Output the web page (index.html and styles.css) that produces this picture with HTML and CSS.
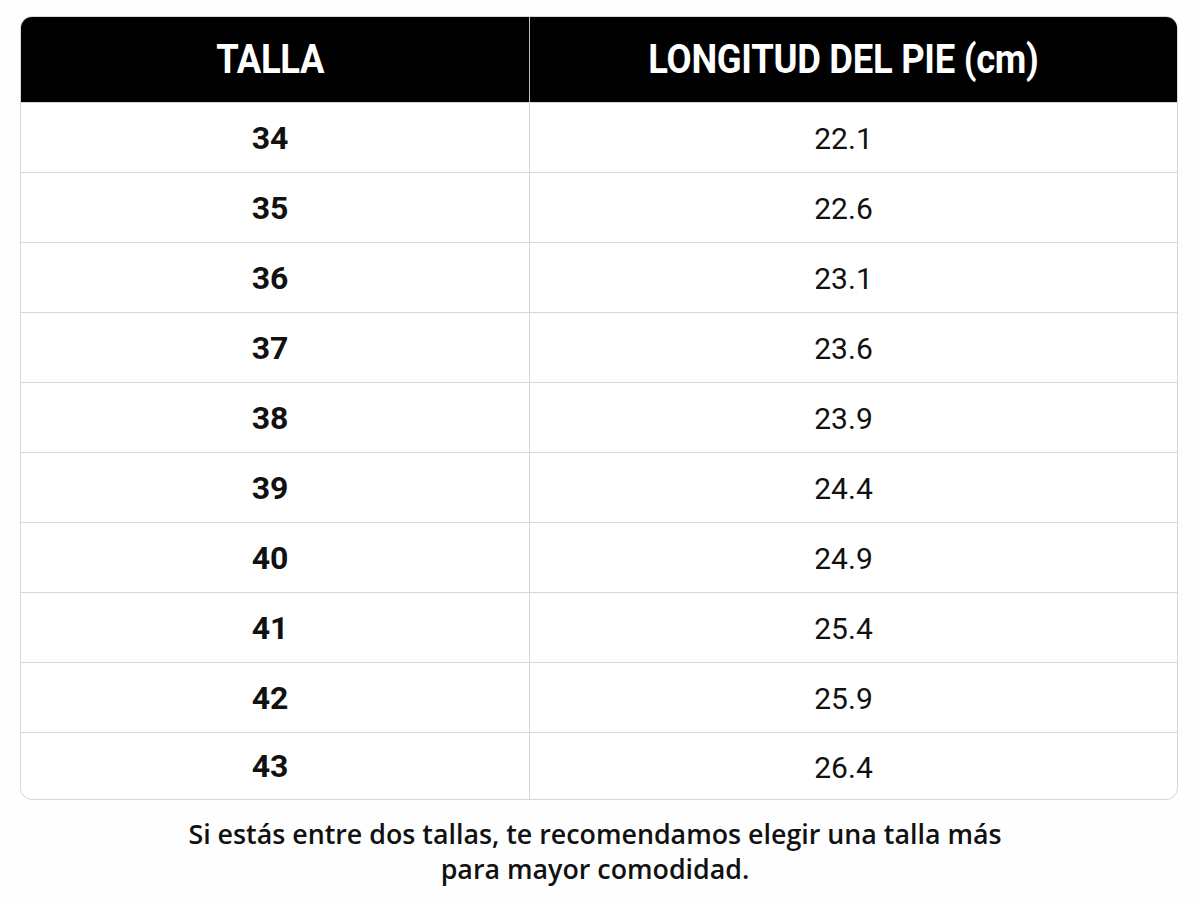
FILE: index.html
```html
<!DOCTYPE html>
<html lang="es">
<head>
<meta charset="utf-8">
<title>Guía de tallas</title>
<link rel="stylesheet" href="styles.css">
</head>
<body>
<main class="page">
  <div class="table">
    <div class="row head">
      <div class="cell c1"><span class="ht">TALLA</span></div>
      <div class="cell c2"><span class="ht">LONGITUD DEL PIE (cm)</span></div>
    </div>
    <div class="row"><div class="cell c1 size">34</div><div class="cell c2 len">22.1</div></div>
    <div class="row"><div class="cell c1 size">35</div><div class="cell c2 len">22.6</div></div>
    <div class="row"><div class="cell c1 size">36</div><div class="cell c2 len">23.1</div></div>
    <div class="row"><div class="cell c1 size">37</div><div class="cell c2 len">23.6</div></div>
    <div class="row"><div class="cell c1 size">38</div><div class="cell c2 len">23.9</div></div>
    <div class="row"><div class="cell c1 size">39</div><div class="cell c2 len">24.4</div></div>
    <div class="row"><div class="cell c1 size">40</div><div class="cell c2 len">24.9</div></div>
    <div class="row"><div class="cell c1 size">41</div><div class="cell c2 len">25.4</div></div>
    <div class="row"><div class="cell c1 size">42</div><div class="cell c2 len">25.9</div></div>
    <div class="row last"><div class="cell c1 size">43</div><div class="cell c2 len">26.4</div></div>
  </div>
  <p class="note">Si estás entre dos tallas, te recomendamos elegir una talla más<br>para mayor comodidad.</p>
</main>
</body>
</html>
```
FILE: styles.css
```css
* { box-sizing: border-box; }
html, body { margin: 0; padding: 0; background: #fefefe; }
body { font-family: Roboto, "Liberation Sans", sans-serif; color: #111; }
.page { padding: 16px 22px 0 20px; }
.table {
  border: 1px solid #d6d6d6;
  border-radius: 12px;
  overflow: hidden;
  background: #fff;
}
.row {
  display: grid;
  grid-template-columns: 509px 1fr;
  height: 70px;
  border-top: 1px solid #d6d6d6;
}
.row.head {
  height: 85px;
  border-top: none;
  background: #000;
}
.row.last { height: 67px; }
.cell {
  display: flex;
  align-items: center;
  justify-content: center;
}
.c1 { border-right: 1px solid #d6d6d6; padding-right: 10px; }
.head .c1 { border-right-color: #bdbdbd; }
.c2 { padding-right: 20px; }
.ht {
  color: #fff;
  font-weight: 700;
  font-size: 40px;
  letter-spacing: -0.3px;
  display: inline-block;
  transform: scaleX(0.91);
}
.size { font-weight: 700; font-size: 32px; color: #111; }
.len { font-weight: 400; font-size: 30px; color: #111; padding-top: 2px; }
.note {
  margin: 16px 0 0 0;
  text-align: center;
  font-family: "Open Sans", Lato, sans-serif;
  font-weight: 600;
  font-size: 26.8px;
  line-height: 35px;
  color: #111;
  padding-right: 8px;
}
```
